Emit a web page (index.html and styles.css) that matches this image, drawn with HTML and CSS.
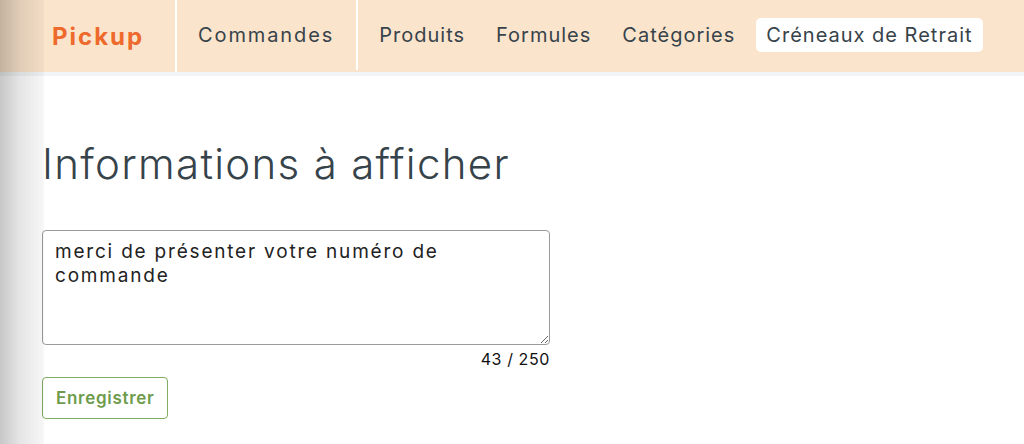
FILE: index.html
```html
<!DOCTYPE html>
<html lang="fr">
<head>
    <meta charset="UTF-8">
    <meta name="viewport" content="width=device-width, initial-scale=1.0">
    <title>Pickup - Créneaux de Retrait</title>
    <link rel="stylesheet" href="styles.css">
</head>
<body>
    <div class="side-shadow"></div>

    <!-- Top navigation -->
    <header class="topbar">
        <div class="brand">Pickup</div>
        <nav class="nav">
            <a class="nav-item nav-first" href="#">Commandes</a>
            <a class="nav-item" href="#">Produits</a>
            <a class="nav-item" href="#">Formules</a>
            <a class="nav-item" href="#">Catégories</a>
            <a class="nav-item active" href="#">Créneaux de Retrait</a>
        </nav>
    </header>

    <main class="content">
        <h1>Informations à afficher</h1>

        <form class="info-form">
            <textarea class="info-text" maxlength="250">merci de présenter votre numéro de commande</textarea>
            <div class="counter">43 / 250</div>
            <button type="submit" class="btn-save">Enregistrer</button>
        </form>
    </main>
</body>
</html>
```

FILE: styles.css
```css
body {
    font-family: Inter, "Noto Sans", sans-serif;
    margin: 0;
    padding: 0;
    background-color: #fff;
    color: #37434a;
}
.side-shadow {
    position: fixed;
    top: 0;
    left: 0;
    bottom: 0;
    width: 44px;
    background: linear-gradient(to right, rgba(0, 0, 0, 0.22), rgba(0, 0, 0, 0.1) 45%, rgba(0, 0, 0, 0.03));
    pointer-events: none;
}
.topbar {
    display: flex;
    align-items: stretch;
    height: 72px;
    background-color: #fbe4cc;
    border-bottom: 4px solid #f2f5f5;
}
.brand {
    display: flex;
    align-items: center;
    width: 123px;
    padding-left: 52px;
    color: #ee6a2c;
    font-size: 24px;
    font-weight: 700;
    letter-spacing: 2px;
    border-right: 2px solid #fff;
}
.nav {
    display: flex;
    align-items: center;
    gap: 11px;
    padding-bottom: 2px;
}
.nav-item {
    color: #37434a;
    text-decoration: none;
    font-size: 20px;
    line-height: 24px;
    letter-spacing: 1px;
    padding: 5px 10px;
    border-radius: 5px;
}
.nav-first {
    display: flex;
    align-items: center;
    align-self: stretch;
    padding: 0 22px 0 21px;
    letter-spacing: 1.9px;
    border-right: 2px solid #fff;
    border-radius: 0;
}
.nav-item.active {
    background-color: #fff;
}
.content {
    padding: 62px 0 0 42px;
}
h1 {
    margin: 0 0 41px;
    font-size: 42px;
    font-weight: 300;
    letter-spacing: 1.3px;
    color: #37434a;
}
.info-form {
    display: flex;
    flex-direction: column;
    width: 508px;
}
.info-text {
    box-sizing: border-box;
    height: 115px;
    padding: 9px 12px;
    font-family: inherit;
    font-size: 19px;
    line-height: 24px;
    letter-spacing: 1.8px;
    color: #222;
    border: 1px solid #9a9a9a;
    border-radius: 4px;
    resize: vertical;
}
.counter {
    align-self: flex-end;
    margin-top: 4px;
    font-size: 16px;
    letter-spacing: 0.6px;
    color: #111;
}
.btn-save {
    align-self: flex-start;
    margin-top: 8px;
    padding: 10px 13px;
    font-family: inherit;
    font-size: 17px;
    font-weight: 600;
    letter-spacing: 0.7px;
    color: #6e9c4c;
    background: #fff;
    border: 1px solid #7fae60;
    border-radius: 4px;
    cursor: pointer;
}
```
